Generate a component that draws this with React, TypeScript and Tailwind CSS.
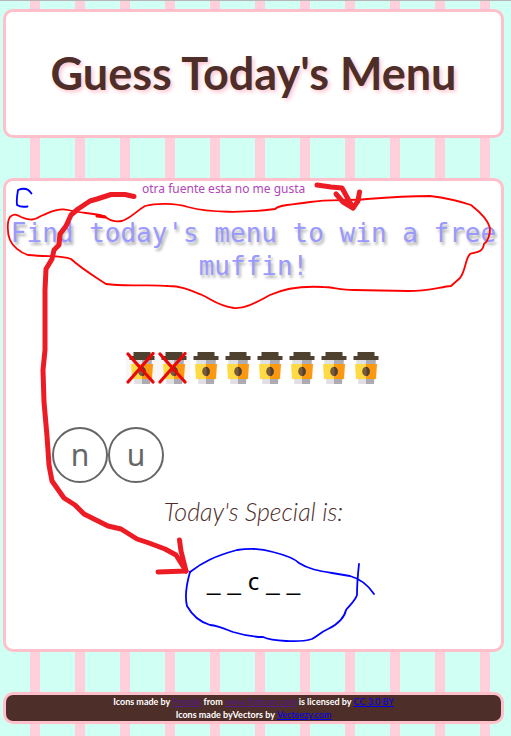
import React from "react";

const TOTAL_CUPS = 8;
const MISSES = 2;
const LETTERS = ["n", "u"];
const WORD = ["_", "_", "c", "_", "_"];

function Cup({ missed }: { missed: boolean }) {
  return (
    <svg viewBox="0 0 32 32" className="size-8" role="img" aria-label={missed ? "Missed guess" : "Guess left"}>
      {missed && <rect width="32" height="32" fill="#f8f6f6" />}
      <path d="M6 7h10v25H8.5z" fill="#e0dfe3" />
      <path d="M16 7h10l-2 25H16z" fill="#acabb1" />
      <path d="M5 12h11v15H6z" fill="#ffda44" />
      <path d="M16 12h11l-1 15H16z" fill="#ff9811" />
      <path d="M7.500 0h17v4H28.500v4H3.500V4h4z" fill="#4f4130" />
      <ellipse cx="16" cy="19.500" rx="3.800" ry="4.700" fill="#7a5a3c" />
      <path d="M16 14.800c5 0 5 9.400 0 9.400 1-3 1-6 0-9.400z" fill="#4f4130" />
      {missed && (
        <path d="M2 2l25 28M27 1.500L2 30" stroke="#e80808" strokeWidth="3.200" strokeLinecap="round" fill="none" />
      )}
    </svg>
  );
}

function Annotations() {
  return (
    <>
      <p className="absolute left-[142px] top-[179px] whitespace-nowrap text-[12px] leading-[17px] text-[#b146b8]">
        otra fuente esta no me gusta
      </p>
      <svg
        viewBox="0 0 511 736"
        className="pointer-events-none absolute left-0 top-0 h-[736px] w-[511px]"
        fill="none"
        strokeLinecap="round"
        strokeLinejoin="round"
        aria-hidden="true"
      >
        <g stroke="#0000ff" strokeWidth="1.800">
          <path d="M31.500 192.500C28 187 23 187 18 189C17 195 16.500 201 17 204C20 206 24 206 27.500 205.500" />
          <path d="M190 571C203 561 215 555 237 549C250 547 263 548 273 551C285 554 295 558 299 562C308 568 319 570 332 572L350 575C361 578 368 584 374 593" />
          <path d="M190 571C186 585 185 597 187 605C192 614 200 621 210 624C220 625 227 629 233 631C243 634 254 636 263 636C272 640 299 642 312 638C318 635 321 631 328 628C339 623 345 615 346 609C350 604 355 600 357 594C357 583 358 572 359 563" />
        </g>
        <g stroke="#ff0000" strokeWidth="1.800">
          <path d="M10 216C14 212 17 214 21 216C30 220 35 219 41 215C52 210 60 207 68 209C80 212 92 212 104 215C110 220 117 221 122 220C131 217 135 211 145 205C156 202 175 202 188 206C210 212 245 212 275 208C280 203 294 204 310 201C330 198 344 200 367 198C392 196 417 195 430 195C446 197 462 201 471 204C480 211 488 219 490 227C490 233 488 240 484 243C483 252 475 251 470 253C465 258 466 269 460 277L451 285C440 286 428 290 408 290L354 289C340 289 333 286 323 286C305 285 285 287 270 294C255 302 245 308 234 307C218 305 211 298 202 294C190 289 181 285 168 285C150 283 125 286 106 283C94 275 82 268 71 258C61 254 50 256 28 254C20 252 12 244 10 239C7 232 7 220 10 216Z" />
          <path d="M97 215L105 216" strokeWidth="3" />
        </g>
        <g stroke="#ed1c24" strokeWidth="5">
          <path d="M134 195.500L125 193.500H111L97 198L90 200L78 208L71 214L66 225L60 233L59 244L54 249L52 258L46 268L45 289V349L43 369L44 401L47 435L49 464L52 480L64 497L75 504L84 513L100 521L108 525L121 528L137 538L149 542L165 548L176 554L186 570" />
          <path d="M179.500 539L181 550L186 570L158 571" />
          <path d="M317 184L331 186L342 187L353 207" />
          <path d="M336 193L343 201L353 207L358 200L359.500 191" />
        </g>
      </svg>
    </>
  );
}

export default function App() {
  const card = "rounded-[10px] border-[3px] border-[#ffc0cb]";
  return (
    <div className="relative min-h-screen border-t border-[#b5b5b5] bg-[repeating-linear-gradient(90deg,#d0fff3_0_30px,#ffcfdb_30px_40px,#d0fff3_40px_45px)] pb-3 pl-[3px] pr-[7px] pt-2 font-['Noto_Sans',sans-serif]">
      <header className={`${card} bg-white py-[34px] text-center`}>
        <h1 className="font-['Lato',sans-serif] text-[45px] font-bold leading-[55px] text-[#4e2e28] [text-shadow:2px_2px_4px_#ffc0cb]">
          Guess Today's Menu
        </h1>
      </header>

      <main className={`${card} mt-10 flex h-[474px] flex-col bg-white`}>
        <h2 className="mt-9 text-center font-['DejaVu_Sans_Mono',monospace] text-[26px] leading-[33px] text-[#9999ff] [text-shadow:2px_3px_3px_#b0b0b0]">
          Find today's menu to win a free muffin!
        </h2>
        <div className="mt-[69px] flex justify-center">
          {Array.from({ length: TOTAL_CUPS }, (_, i) => (
            <Cup key={i} missed={i < MISSES} />
          ))}
        </div>
        <div className="ml-[46px] mt-[43px] flex">
          {LETTERS.map((l) => (
            <button key={l} type="button" className="size-14 rounded-full border-2 border-[#666] text-[30px] leading-none text-[#666]">
              {l}
            </button>
          ))}
        </div>
        <h3 className="mt-2.5 text-center font-['Lato',cursive] text-[25px] font-light italic leading-[36px] text-[#4e2e28]">
          Today's Special is:
        </h3>
        <div className="mt-9 flex items-baseline justify-center gap-[7px] text-[24px] leading-8 text-black">
          {WORD.map((c, i) => (
            <span key={i} className={c === "_" ? "font-['Liberation_Sans',sans-serif]" : ""}>
              {c}
            </span>
          ))}
        </div>
      </main>

      <footer className={`${card} mt-10 bg-[#4e2e28] text-center font-['Lato',sans-serif] text-[9px] font-bold leading-[13px] text-white`}>
        <p>
          Icons made by <a href="#freepik" className="font-normal text-[#551a8b] underline">Freepik</a> from{" "}
          <a href="#flaticon" className="font-normal text-[#551a8b] underline">www.flaticon.com</a> is licensed by{" "}
          <a href="#license" className="font-normal text-[#0000ee] underline">CC 3.0 BY</a>
        </p>
        <p>
          Icons made byVectors by <a href="#vecteezy" className="font-normal text-[#0000ee] underline">Vecteezy.com</a>
        </p>
      </footer>
      <Annotations />
    </div>
  );
}
